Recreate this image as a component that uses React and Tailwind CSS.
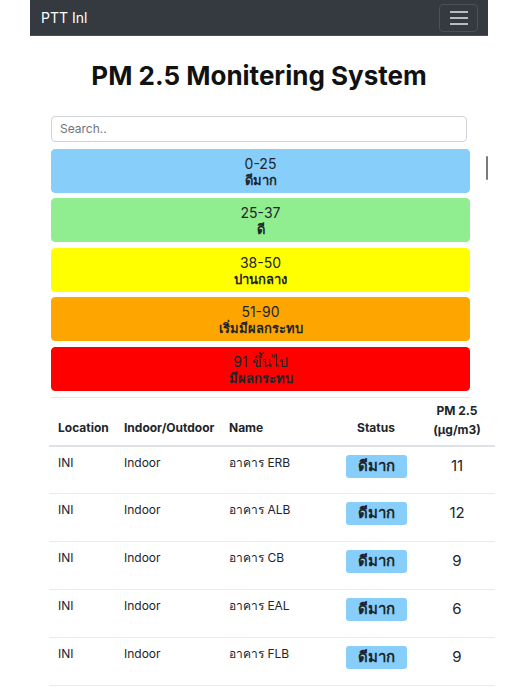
import React from 'react';

const levels = [
    { range: '0-25', label: 'ดีมาก', color: 'bg-[#87cefa] border-[#87cefa]' },
    { range: '25-37', label: 'ดี', color: 'bg-[#90ee90] border-[#90ee90]' },
    { range: '38-50', label: 'ปานกลาง', color: 'bg-[#ffff00] border-[#ffff00]' },
    { range: '51-90', label: 'เริ่มมีผลกระทบ', color: 'bg-[#ffa500] border-[#ffa500]' },
    { range: '91 ขึ้นไป', label: 'มีผลกระทบ', color: 'bg-[#ff0000] border-[#ff0000]' },
];

const stations = [
    { id: 1, location: 'INI', type: 'Indoor', name: 'อาคาร ERB', status: 'ดีมาก', pm: 11 },
    { id: 2, location: 'INI', type: 'Indoor', name: 'อาคาร ALB', status: 'ดีมาก', pm: 12 },
    { id: 3, location: 'INI', type: 'Indoor', name: 'อาคาร CB', status: 'ดีมาก', pm: 9 },
    { id: 4, location: 'INI', type: 'Indoor', name: 'อาคาร EAL', status: 'ดีมาก', pm: 6 },
    { id: 5, location: 'INI', type: 'Indoor', name: 'อาคาร FLB', status: 'ดีมาก', pm: 9 },
];

const font = "font-['Inter','Liberation_Sans','Noto_Sans',sans-serif]";

const App = () => {
    return (
        <div className={`min-h-[692px] bg-white text-[#212529] ${font}`}>
            <div className="ml-[30px] w-[458px]">
                {/* Navbar */}
                <nav className="h-[36px] bg-[#343a40] border-b border-[#4a5057] pl-[11px] pr-[10px] flex items-center justify-between">
                    <span className="text-white text-[14px]">PTT Inl</span>
                    <button className="w-[39px] h-[28px] border border-[#4b5158] rounded-[4px] flex flex-col items-center justify-center gap-[4px]">
                        <span className="block w-[18px] h-[2px] bg-[#b9bcbf]" />
                        <span className="block w-[18px] h-[2px] bg-[#b9bcbf]" />
                        <span className="block w-[18px] h-[2px] bg-[#b9bcbf]" />
                    </button>
                </nav>

                <h1 className="mt-[24px] text-center text-[26px] leading-[31px] font-bold text-[#111]">
                    PM 2.5 Monitering System
                </h1>

                <div className="relative mt-[24px] pl-[21px]">
                    {/* Search */}
                    <input
                        type="text"
                        placeholder="Search.."
                        className="w-[416px] h-[26px] border border-[#ced4da] rounded-[4px] px-[8px] text-[12px] placeholder:text-[#6c757d] outline-none"
                    />

                    {/* Level legend */}
                    <div className="mt-[7px] w-[419px] flex flex-col gap-[5.5px]">
                        {levels.map(level => (
                            <div
                                key={level.range}
                                className={`h-[44px] pt-[2px] border rounded-[4px] flex flex-col items-center justify-center leading-[17px] ${level.color}`}
                            >
                                <span className="text-[14px]">{level.range}</span>
                                <span className="text-[13px] font-bold">{level.label}</span>
                            </div>
                        ))}
                    </div>
                    <div className="absolute left-[456px] top-[41px] w-[2px] h-[24px] rounded bg-[#7a7a7a]" />

                    <div className="mt-[6px] w-[419px] border-t border-[#e5e7eb]" />
                </div>

                {/* Station table */}
                <table className="ml-[19px] w-[446px] table-fixed border-collapse text-[12px]">
                    <thead>
                        <tr className="border-b-2 border-[#dee2e6]">
                            <th className="w-[66px] h-[48px] pl-[9px] pb-[8px] text-left align-bottom font-bold">Location</th>
                            <th className="w-[105px] pl-[9px] pb-[8px] text-left align-bottom font-bold">Indoor/Outdoor</th>
                            <th className="w-[113px] pl-[9px] pb-[8px] text-left align-bottom font-bold">Name</th>
                            <th className="w-[86px] pb-[8px] text-center align-bottom font-bold">Status</th>
                            <th className="w-[76px] pb-[6px] text-center align-bottom font-bold leading-[19px]">PM 2.5<br />(µg/m3)</th>
                        </tr>
                    </thead>
                    <tbody>
                        {stations.map(s => (
                            <tr key={s.id} className="border-b border-[#e9ecef] h-[48px] align-top">
                                <td className="pl-[9px] pt-[7px]">{s.location}</td>
                                <td className="pl-[9px] pt-[7px]">{s.type}</td>
                                <td className="pl-[9px] pt-[7px]">{s.name}</td>
                                <td className="pt-[8px] text-center">
                                    <span className="inline-flex items-center justify-center w-[61px] h-[23px] rounded-[3px] bg-[#87cefa] text-[15px] font-bold">
                                        {s.status}
                                    </span>
                                </td>
                                <td className="pt-[8px] text-center text-[15px]">{s.pm}</td>
                            </tr>
                        ))}
                    </tbody>
                </table>
            </div>
        </div>
    );
};

export default App;
